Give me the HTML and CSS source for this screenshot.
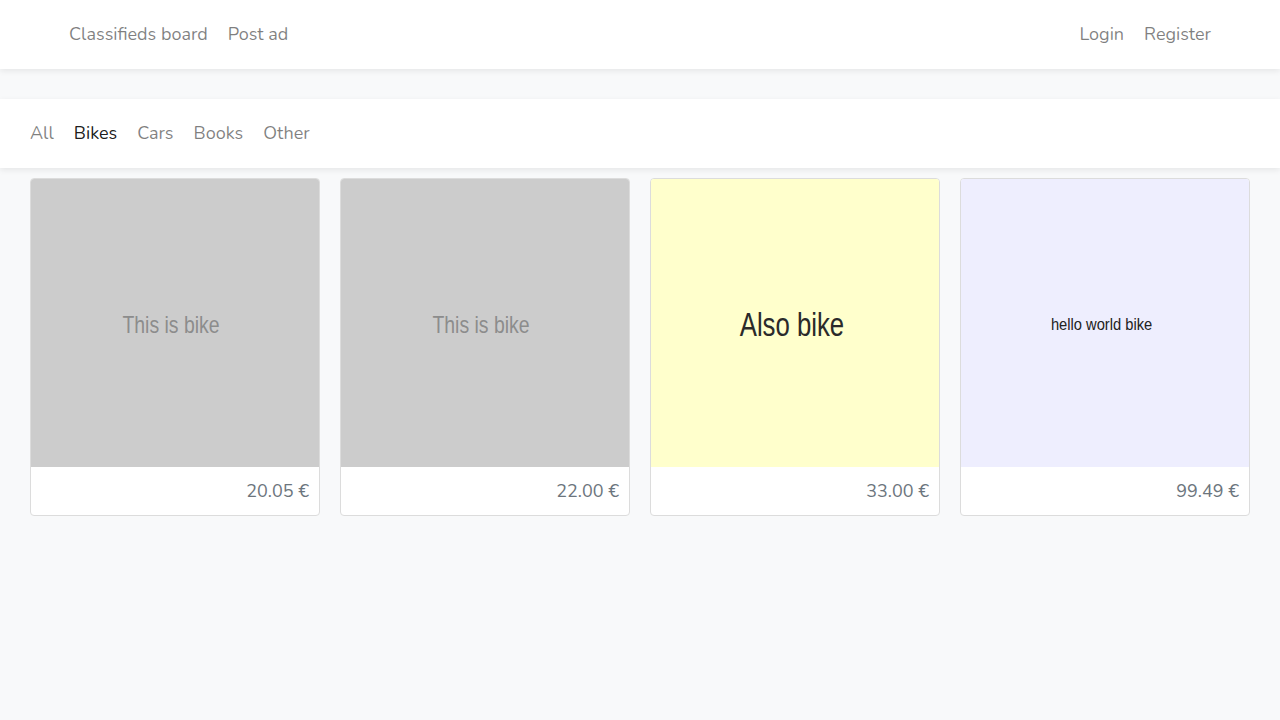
FILE: index.html
```html
<!DOCTYPE html>
<html>
<head>
<meta charset="utf-8">
<link rel="stylesheet" href="styles.css">
</head>
<body>
<nav class="topbar">
  <div class="nav-left">
    <a class="nav-link" href="#">Classifieds board</a>
    <a class="nav-link" href="#">Post ad</a>
  </div>
  <div class="nav-right">
    <a class="nav-link" href="#">Login</a>
    <a class="nav-link" href="#">Register</a>
  </div>
</nav>
<nav class="catbar">
  <a class="cat-link" href="#">All</a>
  <a class="cat-link active" href="#">Bikes</a>
  <a class="cat-link" href="#">Cars</a>
  <a class="cat-link" href="#">Books</a>
  <a class="cat-link" href="#">Other</a>
</nav>
<main class="grid">
  <div class="card">
    <div class="thumb thumb-gray"><span class="t-gray">This is bike</span></div>
    <div class="price">20.05 €</div>
  </div>
  <div class="card">
    <div class="thumb thumb-gray"><span class="t-gray">This is bike</span></div>
    <div class="price">22.00 €</div>
  </div>
  <div class="card">
    <div class="thumb thumb-yellow"><span class="t-big">Also bike</span></div>
    <div class="price">33.00 €</div>
  </div>
  <div class="card">
    <div class="thumb thumb-lav"><span class="t-small">hello world bike</span></div>
    <div class="price">99.49 €</div>
  </div>
</main>
</body>
</html>
```
FILE: styles.css
```css
* { box-sizing: border-box; }
html, body { margin: 0; padding: 0; }
body {
  background: #f8f9fa;
  font-family: "Nunito", "Lato", "Noto Sans", sans-serif;
  font-size: 18px;
  color: #212529;
  width: 1280px;
  height: 720px;
}
a { text-decoration: none; }
.topbar {
  height: 69px;
  background: #fff;
  box-shadow: 0 2px 6px rgba(0,0,0,0.08);
  display: flex;
  justify-content: space-between;
  align-items: center;
  padding: 0 69px 2px;
  position: relative;
}
.nav-left, .nav-right { display: flex; gap: 20px; }
.nav-link { color: rgba(0,0,0,0.5); }
.catbar {
  margin-top: 30px;
  height: 69px;
  background: #fff;
  box-shadow: 0 2px 6px rgba(0,0,0,0.08);
  display: flex;
  align-items: center;
  gap: 20px;
  padding: 0 30px 2px;
}
.cat-link { color: rgba(0,0,0,0.5); }
.cat-link.active { color: rgba(0,0,0,0.9); }
.grid {
  display: grid;
  grid-template-columns: repeat(4, 290px);
  gap: 20px;
  padding: 10px 30px;
}
.card {
  background: #fff;
  border: 1px solid #dcdcdc;
  border-radius: 4px;
  overflow: hidden;
}
.thumb {
  height: 288px;
  display: flex;
  align-items: center;
  justify-content: center;
  padding: 4px 7px 0 0;
  font-family: "Liberation Sans", Arial, sans-serif;
}
.thumb span { display: inline-block; white-space: nowrap; }
.thumb-gray { background: #cccccc; }
.thumb-yellow { background: #ffffcc; }
.thumb-lav { background: #eeeefe; }
.t-gray { color: #8c8c8c; font-size: 24px; transform: scaleX(0.81); }
.t-big { color: #2a2a2a; font-size: 33px; transform: scaleX(0.78); }
.t-small { color: #222; font-size: 17px; transform: scaleX(0.865); }
.price {
  height: 48px;
  display: flex;
  align-items: center;
  justify-content: flex-end;
  padding: 0 10px;
  color: #6c757d;
}
```
